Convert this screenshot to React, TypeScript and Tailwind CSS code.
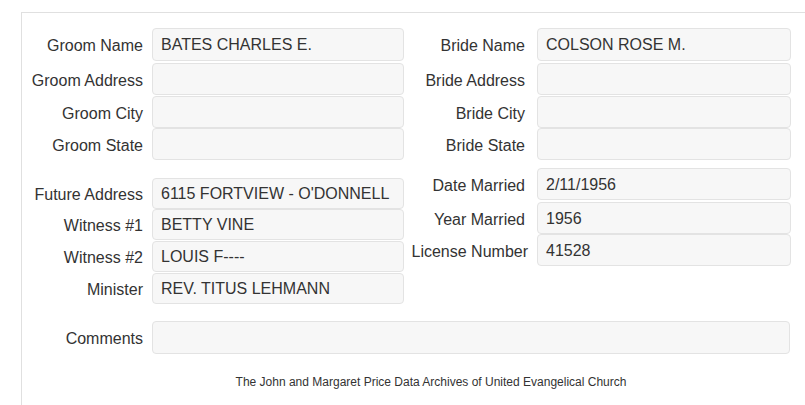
import React from "react";

const Field = ({
  label,
  value,
  labelW,
  inputW,
  h,
  extra = "",
}: {
  label: string;
  value: string;
  labelW: string;
  inputW: string;
  h: string;
  extra?: string;
}) => (
  <div className={`flex items-center ${extra}`}>
    <div className={`${labelW} shrink-0 text-right whitespace-nowrap text-[16px] text-[#333] pt-[3px]`}>{label}</div>
    <div
      className={`${inputW} ${h} shrink-0 flex items-center rounded-[4px] border border-[#e3e3e3] bg-[#f7f7f7] pl-[8px] pt-[1px] text-[16px] text-[#333]`}
    >
      {value}
    </div>
  </div>
);

export default function App() {
  return (
    <div className="w-[805px] h-[405px] overflow-hidden bg-white" style={{ fontFamily: '"Liberation Sans", Arial, sans-serif' }}>
      <div className="ml-[21px] mt-[12px] w-[818px] h-[400px] border-l border-t border-[#e0e0e0] pt-[15px]">
        {/* Section 1 */}
        <div className="flex">
          <div className="flex flex-col w-[383px] shrink-0">
            <Field label="Groom Name" value="BATES CHARLES E." labelW="w-[130px] pr-[9px]" inputW="w-[252px]" h="h-[33px]" extra="mb-[2px]" />
            <Field label="Groom Address" value="" labelW="w-[130px] pr-[9px]" inputW="w-[252px]" h="h-[32px]" extra="mb-[1px]" />
            <Field label="Groom City" value="" labelW="w-[130px] pr-[9px]" inputW="w-[252px]" h="h-[32px]" />
            <Field label="Groom State" value="" labelW="w-[130px] pr-[9px]" inputW="w-[252px]" h="h-[32px]" />
          </div>
          <div className="flex flex-col">
            <Field label="Bride Name" value="COLSON ROSE M." labelW="w-[132px] pr-[12px]" inputW="w-[254px]" h="h-[33px]" extra="mb-[2px]" />
            <Field label="Bride Address" value="" labelW="w-[132px] pr-[12px]" inputW="w-[254px]" h="h-[32px]" extra="mb-[1px]" />
            <Field label="Bride City" value="" labelW="w-[132px] pr-[12px]" inputW="w-[254px]" h="h-[32px]" />
            <Field label="Bride State" value="" labelW="w-[132px] pr-[12px]" inputW="w-[254px]" h="h-[32px]" />
          </div>
        </div>

        {/* Section 2 */}
        <div className="flex mt-[8px]">
          <div className="flex flex-col w-[383px] shrink-0 pt-[10px]">
            <Field label="Future Address" value="6115 FORTVIEW - O'DONNELL" labelW="w-[130px] pr-[9px]" inputW="w-[252px]" h="h-[31px]" />
            <Field label="Witness #1" value="BETTY VINE" labelW="w-[130px] pr-[9px]" inputW="w-[252px]" h="h-[31px]" extra="mb-[1px]" />
            <Field label="Witness #2" value="LOUIS F----" labelW="w-[130px] pr-[9px]" inputW="w-[252px]" h="h-[31px]" extra="mb-[1px]" />
            <Field label="Minister" value="REV. TITUS LEHMANN" labelW="w-[130px] pr-[9px]" inputW="w-[252px]" h="h-[31px]" />
          </div>
          <div className="flex flex-col">
            <Field label="Date Married" value="2/11/1956" labelW="w-[132px] pr-[12px]" inputW="w-[254px]" h="h-[32px]" extra="mb-[2px]" />
            <Field label="Year Married" value="1956" labelW="w-[132px] pr-[12px]" inputW="w-[254px]" h="h-[32px]" />
            <Field label="License Number" value="41528" labelW="w-[132px] pr-[9px]" inputW="w-[254px]" h="h-[32px]" />
          </div>
        </div>

        {/* Comments */}
        <div className="mt-[17px]">
          <Field label="Comments" value="" labelW="w-[130px] pr-[9px]" inputW="w-[638px]" h="h-[33px]" />
        </div>

        <div className="w-[818px] text-center text-[12px] text-[#333] mt-[19px]">
          The John and Margaret Price Data Archives of United Evangelical Church
        </div>
      </div>
    </div>
  );
}
